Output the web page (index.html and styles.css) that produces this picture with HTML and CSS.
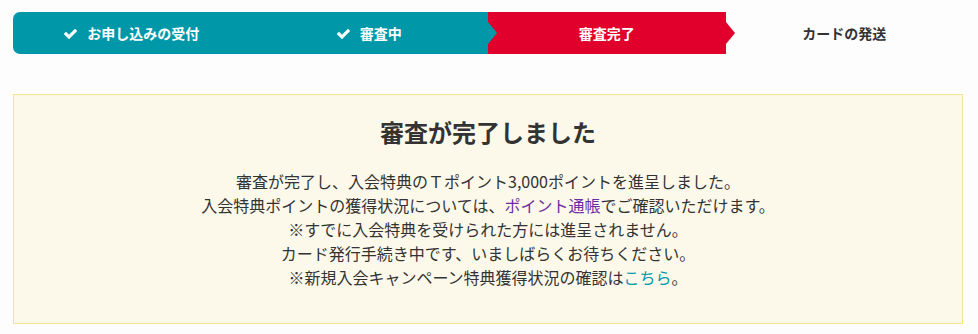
FILE: index.html
```html
<!DOCTYPE html>
<html lang="ja">
<head>
<meta charset="utf-8">
<title>審査完了</title>
<link rel="stylesheet" href="styles.css">
</head>
<body>
<div class="wrap">
  <ol class="steps">
    <li class="step step-done step-first">
      <svg class="check" viewBox="121 334 1550 1188" aria-hidden="true"><path d="M1671 566q0 40-28 68l-724 724-136 136q-28 28-68 28t-68-28l-136-136-362-362q-28-28-28-68t28-68l136-136q28-28 68-28t68 28l294 295 656-657q28-28 68-28t68 28l136 136q28 28 28 68z"/></svg>
      <span>お申し込みの受付</span>
    </li>
    <li class="step step-done step-arrow">
      <svg class="check" viewBox="121 334 1550 1188" aria-hidden="true"><path d="M1671 566q0 40-28 68l-724 724-136 136q-28 28-68 28t-68-28l-136-136-362-362q-28-28-28-68t28-68l136-136q28-28 68-28t68 28l294 295 656-657q28-28 68-28t68 28l136 136q28 28 28 68z"/></svg>
      <span>審査中</span>
    </li>
    <li class="step step-current step-arrow"><span>審査完了</span></li>
    <li class="step step-todo"><span>カードの発送</span></li>
  </ol>

  <section class="result">
    <h1 class="result-title">審査が完了しました</h1>
    <p class="result-text">
      審査が完了し、入会特典のＴポイント3,000ポイントを進呈しました。<br>
      入会特典ポイントの獲得状況については、<a class="link-visited" href="#">ポイント通帳</a>でご確認いただけます。<br>
      ※すでに入会特典を受けられた方には進呈されません。<br>
      カード発行手続き中です、いましばらくお待ちください。<br>
      ※新規入会キャンペーン特典獲得状況の確認は<a class="link" href="#">こちら</a>。
    </p>
  </section>
</div>
</body>
</html>
```

FILE: styles.css
```css
html, body {
  margin: 0;
  padding: 0;
  background: #fdfdfd;
}

body {
  font-family: "Noto Sans CJK JP", "Noto Sans", sans-serif;
  color: #333333;
}

.wrap {
  width: 950px;
  margin: 0 0 0 13px;
  padding-top: 12px;
}

.steps {
  list-style: none;
  margin: 0;
  padding: 0;
  display: flex;
  height: 42px;
}

.step {
  flex: 1 1 0;
  position: relative;
  display: flex;
  align-items: center;
  justify-content: center;
  gap: 10px;
  font-size: 14px;
  font-weight: 700;
  line-height: 1;
}

.step-done {
  background: #0098a8;
  color: #ffffff;
}

.step-first {
  border-radius: 7px 0 0 7px;
}

.step-current {
  background: #e0002b;
  color: #ffffff;
}

.step-todo {
  background: transparent;
  color: #333333;
}

.step-arrow::after {
  content: "";
  position: absolute;
  right: -9px;
  top: 10px;
  width: 0;
  height: 0;
  border-top: 11px solid transparent;
  border-bottom: 11px solid transparent;
  border-left: 9px solid transparent;
  z-index: 2;
}

.step-done.step-arrow::after {
  border-left-color: #0098a8;
}

.step-current.step-arrow::after {
  border-left-color: #e0002b;
}

.check {
  width: 13px;
  height: 10px;
  fill: #ffffff;
  flex: none;
  margin-top: 1px;
}

.result {
  margin-top: 40px;
  background: #fcf9ea;
  border: 1px solid #f6e78a;
  padding: 19px 0 34px;
  text-align: center;
}

.result-title {
  margin: 0;
  font-size: 24px;
  line-height: 36px;
  font-weight: 700;
  color: #333333;
}

.result-text {
  margin: 19px 0 0;
  font-size: 16px;
  line-height: 24px;
  color: #333333;
}

.link-visited {
  color: #6b2fa3;
  text-decoration: none;
}

.link {
  color: #0098a8;
  text-decoration: none;
}
```
